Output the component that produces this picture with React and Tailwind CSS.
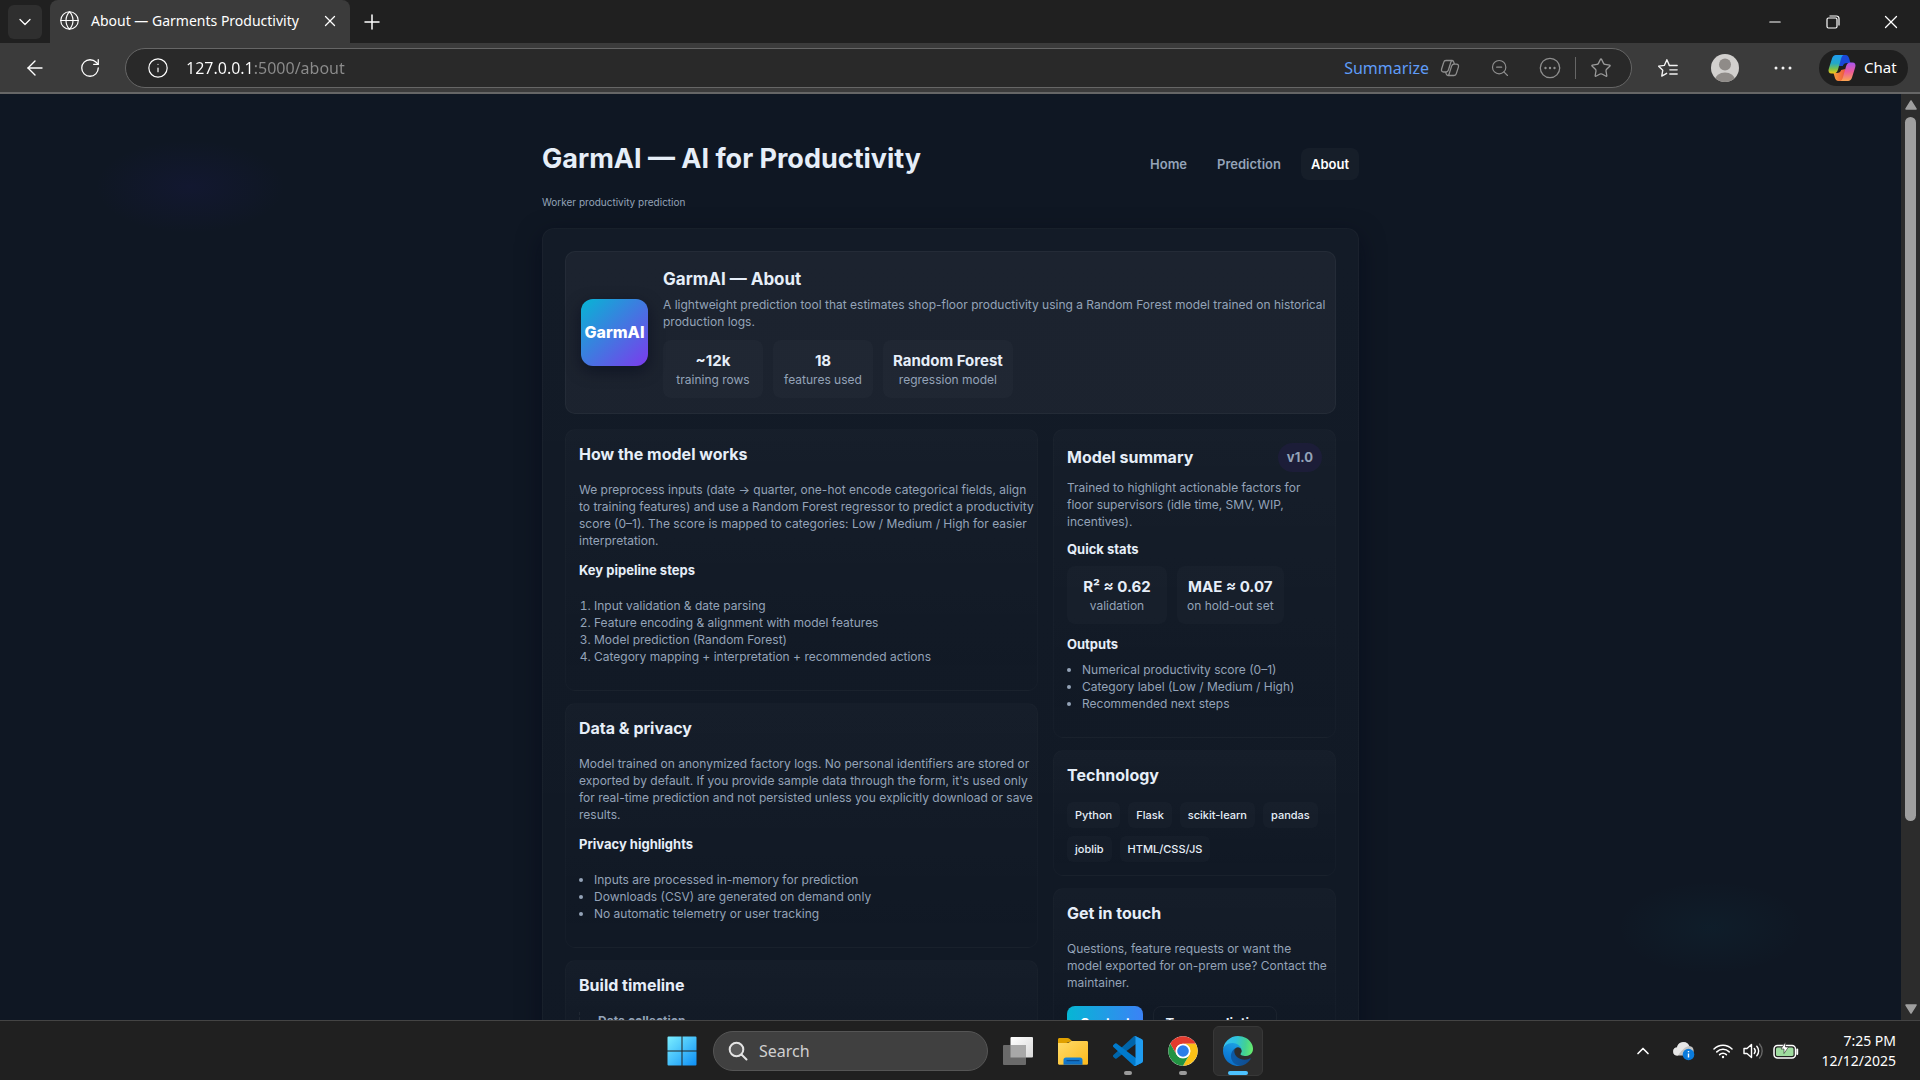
import {
  ArrowLeft,
  ChevronDown,
  ChevronUp,
  Globe,
  Info,
  Minus,
  Plus,
  RotateCw,
  Star,
  X,
  ZoomOut,
} from 'lucide-react'

const navLinks = ['Home', 'Prediction', 'About']

const heroStats = [
  { value: '~12k', label: 'training rows' },
  { value: '18', label: 'features used' },
  { value: 'Random Forest', label: 'regression model' },
]

const quickStats = [
  { value: 'R² ≈ 0.62', label: 'validation' },
  { value: 'MAE ≈ 0.07', label: 'on hold-out set' },
]

const pipelineSteps = [
  'Input validation & date parsing',
  'Feature encoding & alignment with model features',
  'Model prediction (Random Forest)',
  'Category mapping + interpretation + recommended actions',
]

const privacyPoints = [
  'Inputs are processed in-memory for prediction',
  'Downloads (CSV) are generated on demand only',
  'No automatic telemetry or user tracking',
]

const outputs = [
  'Numerical productivity score (0–1)',
  'Category label (Low / Medium / High)',
  'Recommended next steps',
]

const technologies = ['Python', 'Flask', 'scikit-learn', 'pandas', 'joblib', 'HTML/CSS/JS']

/* ---------- Icons ---------- */

function CopilotLogo() {
  return (
    <svg viewBox="0 0 28 28" className="h-7 w-7" aria-hidden="true">
      <defs>
        <linearGradient id="cpLeft" x1="0" y1="0" x2="0" y2="1">
          <stop offset="0" stopColor="#1f9cf0" />
          <stop offset="0.45" stopColor="#22a7c8" />
          <stop offset="0.75" stopColor="#7cc04b" />
          <stop offset="1" stopColor="#f6c915" />
        </linearGradient>
        <linearGradient id="cpRight" x1="0" y1="0" x2="0" y2="1">
          <stop offset="0" stopColor="#a855f0" />
          <stop offset="0.5" stopColor="#ec5a9a" />
          <stop offset="1" stopColor="#fba650" />
        </linearGradient>
        <linearGradient id="cpBottom" x1="0" y1="0" x2="1" y2="0">
          <stop offset="0" stopColor="#f9a03c" />
          <stop offset="1" stopColor="#e8413c" />
        </linearGradient>
      </defs>
      <path d="M7.500 1H17.500c2.200 0 3 1.300 3.600 3.200L22.500 9H19c-2.200 0-3.600 1-4.200 3L11 12z" fill="#1a48d8" />
      <path d="M20.500 27H10.500c-2.200 0-3-1.300-3.600-3.200L5.500 19H9c2.200 0 3.600-1 4.200-3l4-1z" fill="url(#cpBottom)" />
      <path d="M8 1h7.500c-1.200.6-1.800 1.700-2.300 3.300L10 15.500c-.8 2.500-2 4-4.500 4H3.500C1 19.500 0 17.500.7 15L4 4.500C4.700 2.200 6 1 8 1z" fill="url(#cpLeft)" />
      <path d="M20 27h-7.500c1.200-.6 1.800-1.700 2.300-3.300L18 12.500c.8-2.500 2-4 4.500-4h2c2.500 0 3.500 2 2.800 4.500L24 23.500c-.7 2.300-2 3.500-4 3.500z" fill="url(#cpRight)" />
    </svg>
  )
}

function CopilotOutline() {
  return (
    <svg viewBox="0 0 20 20" className="h-5 w-5" fill="none" stroke="#8f8f8f" strokeWidth="1.300" strokeLinejoin="round" aria-hidden="true">
      <path d="M6 2.500h6c1 0 1.500.6 1.800 1.600l.5 2M6 2.500c-1.200 0-2 .7-2.300 1.900L1.600 11c-.5 1.700.3 3 2 3H6c1.200 0 2-.8 2.400-2L11 3.800c.2-.7.6-1.300 1.200-1.300" />
      <path d="M14 17.500H8c-1 0-1.500-.6-1.800-1.600l-.5-1.900M14 17.500c1.200 0 2-.7 2.300-1.900l2.100-6.500c.5-1.700-.3-3-2-3H14c-1.200 0-2 .8-2.400 2L9 16.200c-.2.700-.6 1.300-1.200 1.300" />
    </svg>
  )
}

function FavoritesIcon() {
  return (
    <svg viewBox="0 0 24 24" className="h-[22px] w-[22px]" fill="none" stroke="#f2f2f2" strokeWidth="1.500" strokeLinecap="round" strokeLinejoin="round" aria-hidden="true">
      <path d="M13.500 9.200 10.800 3 8 9.200l-6.200.8 4.500 4.400-1.100 6.400 5.300-3" />
      <path d="M13.500 9.300H22M14 14h8M14 18.500h8" />
    </svg>
  )
}

function CircleDots() {
  return (
    <svg viewBox="0 0 22 22" className="h-[22px] w-[22px]" aria-hidden="true">
      <circle cx="11" cy="11" r="9.700" fill="none" stroke="#8f8f8f" strokeWidth="1.300" />
      <circle cx="6.500" cy="11" r="1.200" fill="#8f8f8f" />
      <circle cx="11" cy="11" r="1.200" fill="#8f8f8f" />
      <circle cx="15.500" cy="11" r="1.200" fill="#8f8f8f" />
    </svg>
  )
}

function Avatar() {
  return (
    <svg viewBox="0 0 28 28" className="h-7 w-7" aria-hidden="true">
      <clipPath id="avatarClip">
        <circle cx="14" cy="14" r="14" />
      </clipPath>
      <g clipPath="url(#avatarClip)">
        <rect width="28" height="28" fill="#d2d0ce" />
        <circle cx="14" cy="10.500" r="6" fill="#8f8b88" />
        <ellipse cx="14" cy="26" rx="10" ry="7.500" fill="#8f8b88" />
      </g>
    </svg>
  )
}

function WindowsLogo() {
  return (
    <svg viewBox="0 0 30 30" className="h-[30px] w-[30px]" aria-hidden="true">
      <defs>
        <linearGradient id="winGrad" gradientUnits="userSpaceOnUse" x1="0" y1="0" x2="30" y2="30">
          <stop offset="0" stopColor="#7df0ff" />
          <stop offset="0.5" stopColor="#45c0fb" />
          <stop offset="1" stopColor="#0b8cf5" />
        </linearGradient>
      </defs>
      <path d="M1.500.5h13v14h-14v-13a1 1 0 0 1 1-1zM15.500.5h13a1 1 0 0 1 1 1v13h-14zM.5 15.500h14v14h-13a1 1 0 0 1-1-1zM15.500 15.500h14v13a1 1 0 0 1-1 1h-13z" fill="url(#winGrad)" />
    </svg>
  )
}

function TaskViewIcon() {
  return (
    <svg viewBox="0 0 30 30" className="h-[30px] w-[30px]" aria-hidden="true">
      <defs>
        <linearGradient id="tvGrad" x1="0" y1="0" x2="1" y2="1">
          <stop offset="0" stopColor="#ffffff" />
          <stop offset="1" stopColor="#d8d8d8" />
        </linearGradient>
      </defs>
      <rect x="7.500" y="1" width="22.500" height="20.500" rx="1" fill="url(#tvGrad)" />
      <rect x="0" y="9" width="23" height="20" rx="1" fill="#6a6a6a" />
      <path d="M7.500 9H23v12.500H7.500z" fill="#a8a8a8" />
    </svg>
  )
}

function FolderIcon() {
  return (
    <svg viewBox="0 0 30 30" className="h-[30px] w-[30px]" aria-hidden="true">
      <defs>
        <linearGradient id="folderGrad" x1="0" y1="0" x2="1" y2="1">
          <stop offset="0" stopColor="#ffdc6b" />
          <stop offset="1" stopColor="#fcb91c" />
        </linearGradient>
        <linearGradient id="folderBlue" x1="0" y1="0" x2="0" y2="1">
          <stop offset="0" stopColor="#1584d8" />
          <stop offset="1" stopColor="#0f6cc0" />
        </linearGradient>
      </defs>
      <path d="M0 10V3.500C0 2.500.7 2 1.500 2h8c.8 0 1.400.2 2 .8L14 5z" fill="#e0a000" />
      <path d="M0 9.500V7h9.500c.8 0 1.300-.2 1.900-.8l.6-.5c.6-.5 1-.7 2-.7h14.500c1 0 1.500.5 1.500 1.500v21c0 .8-.4 1.200-1.200 1.200H1.200C.4 28.700 0 28.300 0 27.500z" fill="url(#folderGrad)" />
      <path d="M5.500 28.700V24c0-1.600.8-2.500 2.500-2.500h14c1.700 0 2.500.9 2.500 2.500v4.700z" fill="url(#folderBlue)" />
      <path d="M9 24.700h12" stroke="#0b4a8a" strokeWidth="1.200" strokeLinecap="round" />
    </svg>
  )
}

function VsCodeIcon() {
  return (
    <svg viewBox="0 0 100 100" className="h-[30px] w-[30px]" aria-hidden="true">
      <path d="M96.461 10.796 75.857.876a6.230 6.230 0 0 0-7.107 1.207L1.299 63.583a4.167 4.167 0 0 0 .004 6.162l5.510 5.009a4.167 4.167 0 0 0 5.321.236L93.361 13.370C96.086 11.303 100 13.246 100 16.667v-.24a6.250 6.250 0 0 0-3.539-5.631Z" fill="#0065a9" />
      <path d="m96.461 89.204-20.604 9.920a6.230 6.230 0 0 1-7.107-1.207L1.299 36.417a4.167 4.167 0 0 1 .004-6.162l5.510-5.009a4.167 4.167 0 0 1 5.321-.236L93.361 86.630C96.086 88.697 100 86.754 100 83.333v.24a6.250 6.250 0 0 1-3.539 5.631Z" fill="#007acc" />
      <path d="M75.858 99.126a6.230 6.230 0 0 1-7.108-1.209C71.056 100.223 75 98.590 75 95.328V4.672C75 1.410 71.056-.223 68.750 2.083a6.230 6.230 0 0 1 7.108-1.209l20.601 9.907A6.250 6.250 0 0 1 100 16.413v67.174a6.250 6.250 0 0 1-3.541 5.633Z" fill="#1f9cf0" />
    </svg>
  )
}

function ChromeIcon() {
  return (
    <svg viewBox="0 0 48 48" className="h-[30px] w-[30px]" aria-hidden="true">
      <circle cx="24" cy="24" r="23.500" fill="#fff" />
      <path d="M3.650 12.250A23.500 23.500 0 0 1 44.350 12.250H24a11.750 11.750 0 0 0-10.180 17.630z" fill="#e33b2e" />
      <path d="M44.350 12.250A23.500 23.500 0 0 1 24 47.500l10.180-17.630A11.750 11.750 0 0 0 24 12.250z" fill="#fbc116" />
      <path d="M24 47.500A23.500 23.500 0 0 1 3.650 12.250l10.170 17.630A11.750 11.750 0 0 0 34.180 29.870z" fill="#229342" />
      <circle cx="24" cy="24" r="11.750" fill="#fff" />
      <circle cx="24" cy="24" r="9.300" fill="#2b7de9" />
    </svg>
  )
}

function EdgeIcon() {
  return (
    <svg viewBox="0 0 256 256" className="h-[30px] w-[30px]" aria-hidden="true">
      <defs>
        <linearGradient id="edgeA" x1="0.2" y1="0.6" x2="1" y2="0.6">
          <stop offset="0" stopColor="#0c59a4" />
          <stop offset="1" stopColor="#114a8b" />
        </linearGradient>
        <linearGradient id="edgeB" x1="0.6" y1="0.1" x2="0.3" y2="1">
          <stop offset="0" stopColor="#1b9de2" />
          <stop offset="0.5" stopColor="#0f80d8" />
          <stop offset="1" stopColor="#0a6cc4" />
        </linearGradient>
        <linearGradient id="edgeC" x1="0" y1="0.4" x2="1" y2="0.5">
          <stop offset="0" stopColor="#35c1f1" />
          <stop offset="0.4" stopColor="#2fc2df" />
          <stop offset="0.75" stopColor="#43d292" />
          <stop offset="1" stopColor="#66eb6e" />
        </linearGradient>
      </defs>
      <path d="M231.050 190.540a93 93 0 0 1-10.540 4.710 101.900 101.900 0 0 1-35.900 6.460c-47.320 0-88.540-32.550-88.540-74.320a31.500 31.500 0 0 1 16.430-27.310c-42.800 1.800-53.800 46.400-53.800 72.530 0 73.880 68.090 81.370 82.760 81.370 7.910 0 19.840-2.300 27-4.560l1.310-.44a128.300 128.300 0 0 0 66.600-52.800 4 4 0 0 0-5.320-5.640z" fill="url(#edgeA)" />
      <path d="M105.730 241.420a79.200 79.200 0 0 1-22.740-21.340 80.720 80.720 0 0 1 29.530-120c3.120-1.470 8.450-4.130 15.540-4a32.400 32.400 0 0 1 25.690 13 31.900 31.900 0 0 1 6.360 18.660c0-.21 24.460-79.600-80-79.600-43.900 0-80 41.660-80 78.210a130.200 130.200 0 0 0 12.110 56 128 128 0 0 0 156.380 67.110 75.550 75.550 0 0 1-62.780-8z" fill="url(#edgeB)" />
      <path d="M152.330 148.860c-.81 1.050-3.300 2.500-3.300 5.660 0 2.610 1.700 5.120 4.720 7.230 14.380 10 41.490 8.680 41.560 8.680a59.600 59.600 0 0 0 30.270-8.350 61.380 61.380 0 0 0 30.430-52.880c.26-22.410-8-37.310-11.340-43.910C223.480 23.840 177.720 0 128 0A128 128 0 0 0 0 126.200c.48-36.540 36.800-66.050 80-66.050 3.500 0 23.460.34 42 10.070 16.340 8.580 24.900 18.940 30.850 29.210 6.180 10.670 7.280 24.150 7.280 29.520s-2.740 13.330-7.800 19.910z" fill="url(#edgeC)" />
    </svg>
  )
}

function CloudIcon() {
  return (
    <svg viewBox="0 0 22 20" className="h-5 w-[22px]" aria-hidden="true">
      <path d="M4.500 14.500a4 4 0 0 1-.5-8 6.500 6.500 0 0 1 12.300-1.600A4.900 4.900 0 0 1 17 14.500z" fill="#c4c4c4" />
      <path d="M4 6.500A6.500 6.500 0 0 1 16.300 5C12 5.500 9 9 5 14.500h-.5a4 4 0 0 1-.5-8z" fill="#e6e6e6" />
      <circle cx="15.500" cy="13.500" r="5.800" fill="#0a7bdc" />
      <path d="M15.500 12.500v4M15.500 10v1.300" stroke="#fff" strokeWidth="1.400" />
    </svg>
  )
}

function WifiIcon() {
  return (
    <svg viewBox="0 0 20 16" className="h-4 w-5" fill="none" stroke="#fff" strokeWidth="1.500" strokeLinecap="round" aria-hidden="true">
      <path d="M1 6a12.700 12.700 0 0 1 18 0M3.800 8.900a8.800 8.800 0 0 1 12.400 0M6.600 11.600a4.800 4.800 0 0 1 6.800 0" />
      <circle cx="10" cy="14" r="1.200" fill="#fff" stroke="none" />
    </svg>
  )
}

function VolumeIcon() {
  return (
    <svg viewBox="0 0 21 18" className="h-[18px] w-[21px]" fill="none" stroke="#fff" strokeWidth="1.400" strokeLinecap="round" strokeLinejoin="round" aria-hidden="true">
      <path d="M1 6.500h3L8.500 2.500v13L4 11.500H1z" />
      <path d="M11.300 6.500a4 4 0 0 1 0 5M13.800 4.300a7 7 0 0 1 0 9.400" />
      <path d="M16.500 2a10.500 10.500 0 0 1 0 14" stroke="#666" />
    </svg>
  )
}

function BatteryIcon() {
  return (
    <svg viewBox="0 0 26 18" className="h-[18px] w-[26px]" aria-hidden="true">
      <rect x="1" y="3.500" width="21.500" height="12.500" rx="3.500" fill="none" stroke="#fff" strokeWidth="1.500" />
      <path d="M24.300 7.500V12" stroke="#fff" strokeWidth="1.800" strokeLinecap="round" />
      <rect x="3" y="5.500" width="17.500" height="8.500" rx="1.500" fill="#9fdc9f" />
      <path d="M12.500 0 8 7h3v4.500L15.500 5h-3z" fill="#fff" stroke="#202020" strokeWidth="0.600" />
    </svg>
  )
}

/* ---------- Browser chrome ---------- */

function TabBar() {
  return (
    <div className="flex h-[43px] shrink-0 items-center bg-[#202020] text-white">
      <button aria-label="Tab actions" className="ml-2 flex h-[34px] w-[34px] items-center justify-center rounded-md bg-[#2f2f2f]">
        <ChevronDown size={20} strokeWidth={1.5} />
      </button>
      <div className="ml-2 flex h-full w-[300px] items-center rounded-t-lg bg-[#3b3b3b] pl-[9px] pr-2 pb-0.5">
        <Globe size={21} strokeWidth={1.3} />
        <span className="ml-[11px] flex-1 whitespace-nowrap text-[14px]">About — Garments Productivity</span>
        <button aria-label="Close tab" className="flex h-6 w-6 items-center justify-center">
          <X size={18} strokeWidth={1.7} />
        </button>
      </div>
      <button aria-label="New tab" className="ml-2.5 flex h-6 w-6 items-center justify-center">
        <Plus size={24} strokeWidth={1.5} />
      </button>
      <div className="ml-auto flex h-full">
        <button aria-label="Minimize" className="flex w-[58px] items-center justify-center">
          <Minus size={18} strokeWidth={1.4} />
        </button>
        <button aria-label="Restore" className="flex w-[58px] items-center justify-center">
          <svg viewBox="0 0 14 14" className="h-3.5 w-3.5" fill="none" stroke="#fff" strokeWidth="1.200" aria-hidden="true">
            <rect x="1" y="3" width="10" height="10" rx="1.500" />
            <path d="M3.500 1h7A2.500 2.500 0 0 1 13 3.500v7" />
          </svg>
        </button>
        <button aria-label="Close window" className="flex w-[58px] items-center justify-center">
          <X size={22} strokeWidth={1.4} />
        </button>
      </div>
    </div>
  )
}

function Toolbar() {
  return (
    <div className="flex h-[51px] shrink-0 items-center border-b-2 border-[#666666] bg-[#3b3b3b] pl-[23px] pr-3 text-white">
      <button aria-label="Back" className="flex h-6 w-6 items-center justify-center">
        <ArrowLeft size={26} strokeWidth={1.4} />
      </button>
      <button aria-label="Refresh" className="ml-[31px] flex h-6 w-6 items-center justify-center">
        <RotateCw size={22} strokeWidth={1.4} />
      </button>
      <div className="ml-[23px] flex h-10 flex-1 items-center rounded-full border border-[#666666] bg-[#292929] pl-[21px] pr-[19px]">
        <Info size={22} strokeWidth={1.3} />
        <input
          aria-label="Address"
          defaultValue="127.0.0.1:5000/about"
          className="ml-[17px] min-w-0 flex-1 bg-[linear-gradient(90deg,#ffffff_69px,#8c8c8c_69px)] bg-clip-text text-[16px] text-transparent outline-none"
        />
        <button className="text-[16px] text-[#5f9cf8]">Summarize</button>
        <button aria-label="Copilot" className="ml-[11px]">
          <CopilotOutline />
        </button>
        <button aria-label="Zoom out" className="ml-[30px] text-[#8f8f8f]">
          <ZoomOut size={20} strokeWidth={1.4} />
        </button>
        <button aria-label="More page actions" className="ml-[29px]">
          <CircleDots />
        </button>
        <span className="ml-[14px] h-[22px] w-px bg-[#666666]"></span>
        <button aria-label="Add to favorites" className="ml-[14px] text-[#9a9a9a]">
          <Star size={22} strokeWidth={1.4} />
        </button>
      </div>
      <button aria-label="Favorites" className="ml-[25px]">
        <FavoritesIcon />
      </button>
      <button aria-label="Profile" className="ml-8">
        <Avatar />
      </button>
      <button aria-label="Settings and more" className="ml-[35px]">
        <svg viewBox="0 0 18 4" className="h-1 w-[18px]" fill="#f2f2f2" aria-hidden="true">
          <circle cx="2" cy="2" r="1.500" />
          <circle cx="9" cy="2" r="1.500" />
          <circle cx="16" cy="2" r="1.500" />
        </svg>
      </button>
      <button className="ml-[27px] flex h-9 w-[89px] items-center gap-2 rounded-full bg-[#1f1f1f] pl-[9px] text-[15px]">
        <CopilotLogo />
        Chat
      </button>
    </div>
  )
}

function Scrollbar() {
  return (
    <div className="flex w-[19px] shrink-0 flex-col items-center bg-[#2c2c2c] py-1.5">
      <svg viewBox="0 0 12 10" className="h-2.5 w-3" aria-hidden="true">
        <path d="M6 1l5 8H1z" fill="#9f9f9f" stroke="#9f9f9f" strokeWidth="1.500" strokeLinejoin="round" />
      </svg>
      <div className="mt-[7px] w-[11px] flex-[706] rounded-full bg-[#9f9f9f]"></div>
      <div className="flex-[183]"></div>
      <svg viewBox="0 0 12 10" className="h-2.5 w-3" aria-hidden="true">
        <path d="M6 9l5-8H1z" fill="#9f9f9f" stroke="#9f9f9f" strokeWidth="1.500" strokeLinejoin="round" />
      </svg>
    </div>
  )
}

/* ---------- Page ---------- */

function Stat({ value, label }) {
  return (
    <div className="min-w-[100px] rounded-lg bg-white/2 px-2.5 py-2.5 text-center">
      <div className="text-[15px] leading-[21px] font-bold text-[#e6eef8]">{value}</div>
      <div className="text-[12px] leading-[17px]">{label}</div>
    </div>
  )
}

function Card({ children }) {
  return (
    <section className="rounded-[10px] border border-white/2 bg-linear-to-b from-white/2 to-transparent p-[13px]">
      {children}
    </section>
  )
}

function CardTitle({ children }) {
  return <h3 className="text-[16px] leading-[23px] font-bold text-[#e6eef8]">{children}</h3>
}

function SubTitle({ children }) {
  return <h4 className="text-[13px] leading-[19px] font-bold text-[#e6eef8]">{children}</h4>
}

function Header() {
  return (
    <header className="flex items-start justify-between">
      <div>
        <h1 className="text-[27px] leading-10 font-bold text-[#e6eef8]">GarmAI — AI for Productivity</h1>
        <p className="mt-4 text-[10px] leading-[15px]">Worker productivity prediction</p>
      </div>
      <nav className="mt-[9px] flex gap-2.5">
        {navLinks.map((link) => (
          <a
            key={link}
            href="#"
            className={
              link === 'About'
                ? 'rounded-lg bg-white/3 px-2.5 text-[13px] leading-8 font-semibold text-white'
                : 'rounded-lg px-2.5 text-[13px] leading-8 font-semibold'
            }
          >
            {link}
          </a>
        ))}
      </nav>
    </header>
  )
}

function Hero() {
  return (
    <section className="flex items-center gap-[15px] rounded-[10px] border border-white/4 bg-white/4 p-[15px]">
      <div className="flex h-[67px] w-[67px] shrink-0 items-center justify-center rounded-xl bg-linear-to-br/srgb from-[#06b6d4] to-[#7c3aed] text-[16px] font-extrabold text-white shadow-[0_5px_15px_rgba(2,6,23,0.5)]">
        GarmAI
      </div>
      <div>
        <h2 className="text-[17px] leading-6 font-bold text-[#e6eef8]">GarmAI — About</h2>
        <p className="-mr-2 mt-[5px]">
          A lightweight prediction tool that estimates shop-floor productivity using a Random Forest model trained on
          historical production logs.
        </p>
        <div className="mt-2.5 flex gap-2.5">
          {heroStats.map((stat) => (
            <Stat key={stat.value} value={stat.value} label={stat.label} />
          ))}
        </div>
      </div>
    </section>
  )
}

function AboutPage() {
  return (
    <main className="min-w-0 flex-1 overflow-hidden bg-[#0f1723] bg-[radial-gradient(95px_47px_at_10%_10%,rgba(50,30,180,0.09),transparent),radial-gradient(95px_47px_at_90%_90%,rgba(6,182,212,0.04),transparent)] font-['Inter',sans-serif] text-[12px] leading-[17px] text-[#94a3b8]">
      <div className="mx-auto max-w-[817px] pt-[45px]">
        <Header />
        <div className="mt-[18px] rounded-xl border border-white/3 bg-linear-to-b from-white/2 to-white/1 p-[22px] shadow-[0_8px_25px_rgba(2,6,23,0.5)]">
          <Hero />
          <div className="mt-[15px] flex items-start gap-[15px]">
            <div className="flex min-w-0 flex-1 flex-col gap-3">
              <Card>
                <CardTitle>How the model works</CardTitle>
                <p className="-mr-3 mt-[15px]">
                  We preprocess inputs (date → quarter, one-hot encode categorical fields, align to training features)
                  and use a Random Forest regressor to predict a productivity score (0–1). The score is mapped to
                  categories: Low / Medium / High for easier interpretation.
                </p>
                <div className="mt-3">
                  <SubTitle>Key pipeline steps</SubTitle>
                </div>
                <ol className="mt-[17px] mb-3 list-decimal pl-[15px]">
                  {pipelineSteps.map((step) => (
                    <li key={step}>{step}</li>
                  ))}
                </ol>
              </Card>
              <Card>
                <CardTitle>Data &amp; privacy</CardTitle>
                <p className="-mr-3 mt-[15px]">
                  Model trained on anonymized factory logs. No personal identifiers are stored or exported by default.
                  If you provide sample data through the form, it's used only for real-time prediction and not
                  persisted unless you explicitly download or save results.
                </p>
                <div className="mt-3">
                  <SubTitle>Privacy highlights</SubTitle>
                </div>
                <ul className="mt-[17px] mb-3 list-disc pl-[15px]">
                  {privacyPoints.map((point) => (
                    <li key={point}>{point}</li>
                  ))}
                </ul>
              </Card>
              <Card>
                <CardTitle>Build timeline</CardTitle>
                <div className="mt-[15px] h-20 border-l border-dashed border-white/6 pl-[18px]">
                  <strong className="font-bold">Data collection</strong>
                </div>
              </Card>
            </div>

            <aside className="flex w-[283px] shrink-0 flex-col gap-3">
              <Card>
                <div className="flex items-center justify-between">
                  <CardTitle>Model summary</CardTitle>
                  <span className="rounded-full bg-[#1c1d38] px-[9px] text-[13px] leading-[29px] font-bold">v1.0</span>
                </div>
                <p className="mt-[7px]">
                  Trained to highlight actionable factors for floor supervisors (idle time, SMV, WIP, incentives).
                </p>
                <div className="mt-2.5">
                  <SubTitle>Quick stats</SubTitle>
                </div>
                <div className="mt-[7px] flex gap-2.5">
                  {quickStats.map((stat) => (
                    <Stat key={stat.value} value={stat.value} label={stat.label} />
                  ))}
                </div>
                <div className="mt-[11px]">
                  <SubTitle>Outputs</SubTitle>
                </div>
                <ul className="mt-[7px] mb-3 list-disc pl-[15px]">
                  {outputs.map((output) => (
                    <li key={output}>{output}</li>
                  ))}
                </ul>
              </Card>
              <Card>
                <CardTitle>Technology</CardTitle>
                <div className="mt-[15px] flex flex-wrap gap-2">
                  {technologies.map((tech) => (
                    <span key={tech} className="rounded-md bg-white/2 px-2 text-[11px] leading-[26px] font-medium text-[#e6eef8]">
                      {tech}
                    </span>
                  ))}
                </div>
              </Card>
              <Card>
                <CardTitle>Get in touch</CardTitle>
                <p className="-mr-1.5 mt-[15px]">
                  Questions, feature requests or want the model exported for on-prem use? Contact the maintainer.
                </p>
                <div className="mt-[15px] flex gap-2.5">
                  <a href="#" className="rounded-lg bg-linear-to-r/srgb from-[#06b6d4] to-[#3b82f6] px-[13px] text-[13px] leading-[34px] font-bold text-white">
                    Contact
                  </a>
                  <a href="#" className="rounded-lg border border-white/4 px-[11px] text-[13px] leading-8 font-bold text-[#e6eef8]">
                    Try a prediction
                  </a>
                </div>
              </Card>
            </aside>
          </div>
        </div>
      </div>
    </main>
  )
}

/* ---------- Taskbar ---------- */

function Taskbar() {
  return (
    <footer className="grid h-[60px] shrink-0 grid-cols-[1fr_auto_1fr] items-center border-t border-[#444444] bg-[#202020] text-white">
      <div></div>
      <div className="flex items-center pl-2.5">
        <button aria-label="Start" className="mr-4">
          <WindowsLogo />
        </button>
        <label className="mr-[15px] flex h-10 w-[275px] items-center rounded-full border border-[#555555] bg-[#404040] pl-[14px]">
          <svg viewBox="0 0 20 20" className="h-5 w-5" fill="#5a5a5a" stroke="#e4e4e4" strokeWidth="2" strokeLinecap="round" aria-hidden="true">
            <path d="M13.500 13.500l5 5" />
            <circle cx="8.500" cy="8.500" r="6.800" />
          </svg>
          <input
            type="search"
            aria-label="Search"
            placeholder="Search"
            className="ml-[11px] min-w-0 flex-1 bg-transparent text-[16px] outline-none placeholder:text-[#d0d0d0]"
          />
        </label>
        <button aria-label="Task view" className="mr-[25px]">
          <TaskViewIcon />
        </button>
        <button aria-label="File Explorer" className="mr-[15px]">
          <FolderIcon />
        </button>
        <button aria-label="Visual Studio Code" className="flex h-[50px] w-[50px] flex-col items-center pt-2.5">
          <VsCodeIcon />
          <span className="mt-[5px] h-1 w-2 rounded-full bg-[#9a9a9a]"></span>
        </button>
        <button aria-label="Google Chrome" className="ml-[5px] flex h-[50px] w-[50px] flex-col items-center pt-2.5">
          <ChromeIcon />
          <span className="mt-[5px] h-1 w-2 rounded-full bg-[#9a9a9a]"></span>
        </button>
        <button aria-label="Microsoft Edge" className="ml-[5px] flex h-[50px] w-[50px] flex-col items-center rounded-md border border-[#383838] bg-[#2d2d2d] pt-[9px]">
          <EdgeIcon />
          <span className="mt-[5px] h-1 w-5 rounded-full bg-[#4cc2ff]"></span>
        </button>
      </div>
      <div className="flex items-center justify-end pr-6">
        <button aria-label="Show hidden icons">
          <ChevronUp size={20} strokeWidth={2} />
        </button>
        <span className="ml-5">
          <CloudIcon />
        </span>
        <span className="ml-[18px]">
          <WifiIcon />
        </span>
        <span className="ml-2.5">
          <VolumeIcon />
        </span>
        <span className="ml-[9px]">
          <BatteryIcon />
        </span>
        <div className="ml-[23px] text-right text-[14px] leading-5">
          <div>7:25 PM</div>
          <div>12/12/2025</div>
        </div>
      </div>
    </footer>
  )
}

export default function App() {
  return (
    <div className="flex h-screen flex-col overflow-hidden font-['Noto_Sans',sans-serif]">
      <TabBar />
      <Toolbar />
      <div className="flex min-h-0 flex-1">
        <AboutPage />
        <Scrollbar />
      </div>
      <Taskbar />
    </div>
  )
}
